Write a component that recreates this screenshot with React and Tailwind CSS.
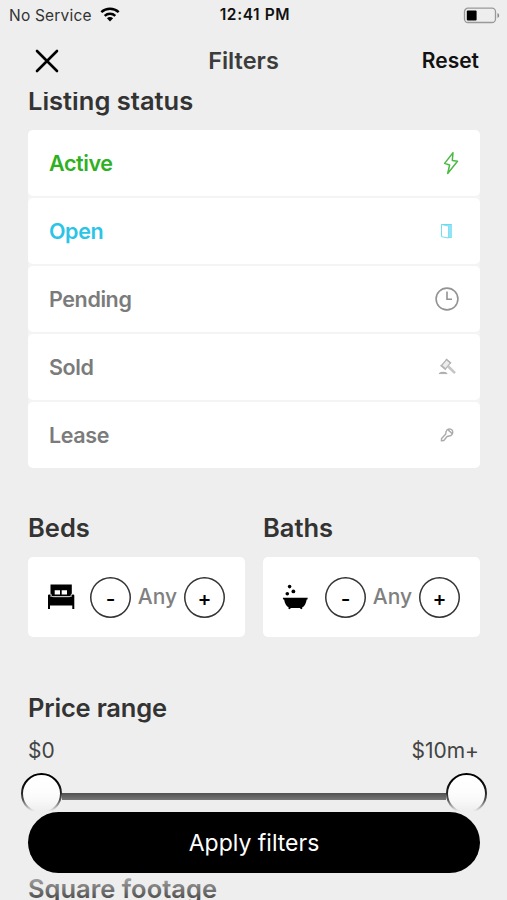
import React, { useState } from 'react';

const statuses = [
  { label: 'Active', color: 'text-[#2fb01f]', icon: BoltIcon },
  { label: 'Open', color: 'text-[#2cc4e6]', icon: DoorIcon },
  { label: 'Pending', color: 'text-[#7b7b7b]', icon: ClockIcon },
  { label: 'Sold', color: 'text-[#7b7b7b]', icon: GavelIcon },
  { label: 'Lease', color: 'text-[#7b7b7b]', icon: KeyIcon },
];

function BoltIcon() {
  return (
    <svg width="24" height="24" viewBox="0 0 24 24" fill="none" className="relative left-[4px]" stroke="#4cb944" strokeWidth="1.5" strokeLinejoin="round">
      <path d="M14 1.800 5.600 12.400l5 1.600-1.900 8.500 9.800-12.300-5.200-.8z" />
    </svg>
  );
}

function DoorIcon() {
  return (
    <svg width="24" height="24" viewBox="0 0 24 24" fill="none" strokeWidth="1">
      <path d="M6.500 5.500h10v13H14" stroke="#62d6ee" />
      <path d="M6.500 5.500v12.200l7 1.300V7z" stroke="#75dcf1" />
      <path d="M13.500 7l-3.500-1.200h7v12.700h-3.500z" fill="#90e4f6" />
    </svg>
  );
}

function ClockIcon() {
  return (
    <svg width="24" height="24" viewBox="0 0 24 24" fill="none" stroke="#939393" strokeWidth="1.600">
      <circle cx="12" cy="12" r="10.900" />
      <path d="M12 4.600v7.600h5" />
    </svg>
  );
}

function GavelIcon() {
  return (
    <svg width="24" height="24" viewBox="0 0 24 24" fill="none" stroke="#b4b4b4" strokeWidth="1.200">
      <path d="m6.500 10.500 5-6 4 3.300-5 6z" fill="#ececec" />
      <path d="m5.500 10.200 5.300 4.500M11 4l5 4.300" strokeWidth="1.500" />
      <path d="m13 11.200 7 6.900" stroke="#c6c6c6" strokeWidth="2.600" />
      <path d="M4 18.600c.8-1.800 7.400-1.800 8.200 0z" fill="#999" stroke="#aaa" strokeWidth=".8" />
    </svg>
  );
}

function KeyIcon() {
  return (
    <svg width="24" height="24" viewBox="0 0 24 24" fill="none" stroke="#aaa" strokeWidth="1.400" strokeLinejoin="round">
      <path d="M12.200 6.800c2-1.400 4.800-.7 5.400 1.200.7 2.400-.9 4.800-3.500 5l-2 .5-3.300 4-2.400.4.200-2.500 4.200-4.500c-.1-1.700.2-3 1.400-4.100z" />
      <path d="M13.500 7.300 17 10.500 15 8.500z" strokeWidth="1.500" />
    </svg>
  );
}

function BedIcon() {
  return (
    <svg width="28" height="26" viewBox="0 0 28 26">
      <path d="M3.500.5h21.300v12H3.500z" />
      <path d="M1 11.500c0-1.300 2.500-1.300 2.500 0v1.500h21.300v-1.500c0-1.300 2.500-1.300 2.500 0V25h-2v-3.500H3V25H1z" />
      <path d="M7.700 6.300h5.300v4.200H7.700zm7 0H20v4.200h-5.300z" fill="#fff" />
      <path d="M3.900 9.800c.2 2.200 1 2.900 2.600 2.900h15.400c1.600 0 2.400-.7 2.600-2.900" fill="none" stroke="#ddd" strokeWidth=".9" />
    </svg>
  );
}

function BathIcon() {
  return (
    <svg width="28" height="26" viewBox="0 0 28 26" fill="#000">
      <circle cx="7.600" cy="2.600" r="1.800" />
      <circle cx="11.400" cy="7.400" r="1.900" />
      <circle cx="5.300" cy="9.800" r="1.800" />
      <path d="M.8 13.800h25l-.4 1.600h-.7c-.6 4-2.400 7-4.600 8l.2 1.300c-1 .8-2 .6-2.300-.6H8.800c-.4 1.200-1.500 1.400-2.400.6l.3-1.300c-2.300-1.100-4-4-4.600-8h-.8z" />
    </svg>
  );
}

function StatusBar() {
  return (
    <div className="grid h-[30px] grid-cols-3 items-center pl-[9px] pr-[7px] text-[15.5px] leading-none text-[#333]">
      <div className="flex items-center gap-[8px]">
        <span className="whitespace-nowrap pt-px tracking-[0.2px]">No Service</span>
        <svg width="20" height="15" viewBox="0 0 20 15" fill="none" stroke="#000" strokeWidth="2.500" className="relative -top-px">
          <path d="M1.300 5.200c5-4.600 12.400-4.600 17.400 0" />
          <path d="M4.700 8.800c3-2.800 7.600-2.800 10.600 0" />
          <path d="M10 14.400 6.900 11.300c1.800-1.600 4.400-1.600 6.200 0z" fill="#000" stroke="none" />
        </svg>
      </div>
      <span className="pl-px text-center font-semibold tracking-[0.6px] text-[#111]">12:41 PM</span>
      <svg width="37" height="17" viewBox="0 0 37 17" className="justify-self-end">
        <rect x="1.500" y="1.200" width="31" height="14.300" rx="3.500" fill="none" stroke="#999" strokeWidth="1.300" />
        <rect x="3.800" y="3.500" width="9.800" height="10" rx="1" fill="#000" />
        <path d="M34.500 6c2.200.8 2.200 4.200 0 5z" fill="#888" />
      </svg>
    </div>
  );
}

function Counter({ title, icon: Icon }) {
  const [count, setCount] = useState(0);
  return (
    <div className="w-[217px]">
      <h2 className="text-[25.5px] font-semibold leading-[30px] text-[#333]">{title}</h2>
      <div className="mt-[14px] flex h-[80px] items-center rounded-[5px] bg-white pl-[19px]">
        <Icon />
        <button
          onClick={() => setCount(Math.max(0, count - 1))}
          className="ml-[15px] flex size-[41px] items-center justify-center rounded-full pt-[2px] text-[21px] font-medium leading-none text-black shadow-[inset_0_0_0_1.5px_#333]"
        >
          -
        </button>
        <span className="w-[53px] text-center text-[21px] font-medium text-[#808080]">{count || 'Any'}</span>
        <button
          onClick={() => setCount(count + 1)}
          className="flex size-[41px] items-center justify-center rounded-full pt-[2px] text-[21px] font-medium leading-none text-black shadow-[inset_0_0_0_1.5px_#333]"
        >
          +
        </button>
      </div>
    </div>
  );
}

const App = () => {
  return (
    <div className="relative h-[900px] w-[507px] overflow-hidden bg-[#eeeeee] font-['Inter','Liberation_Sans',sans-serif]">
      <StatusBar />
      <header className="grid h-[62px] grid-cols-3 items-center pl-[35px] pr-[28px]">
        <svg width="24" height="24" viewBox="0 0 24 24" stroke="#000" strokeWidth="2.600" strokeLinecap="round">
          <path d="m2 2 20 20M22 2 2 22" />
        </svg>
        <h1 className="pr-[27px] text-center text-[23.5px] font-semibold text-[#3c3c3c]">Filters</h1>
        <button className="justify-self-end text-[21px] font-semibold text-[#111]">Reset</button>
      </header>

      {/* Scrolling content */}
      <main className="h-[808px] overflow-hidden pl-[28px] pr-[27px]">
        <h2 className="-mt-[6px] text-[25.5px] font-semibold leading-[30px] text-[#333]">Listing status</h2>
        <div className="mt-[14px] flex flex-col gap-[2px] rounded-[5px] bg-[#f4f4f4]">
          {statuses.map(({ label, color, icon: Icon }) => (
            <div key={label} className="flex h-[66px] items-center justify-between rounded-[5px] bg-white px-[21px]">
              <span className={`text-[21.5px] font-semibold tracking-[-0.4px] ${color}`}>{label}</span>
              <Icon />
            </div>
          ))}
        </div>

        <div className="mt-[45px] flex justify-between">
          <Counter title="Beds" icon={BedIcon} />
          <Counter title="Baths" icon={BathIcon} />
        </div>

        <h2 className="mt-[56px] text-[25.5px] font-semibold leading-[30px] tracking-[-0.2px] text-[#333]">Price range</h2>
        <div className="mt-[14px] flex justify-between pr-px text-[21px] leading-[28px] text-[#444]">
          <span>$0</span>
          <span>$10m+</span>
        </div>
        <div className="-mx-[7px] mt-[8px] flex h-[41px] items-center">
          <div className="size-[41px] rounded-full border-2 border-black bg-white" />
          <div className="mt-[6px] h-[7px] flex-1 bg-[#333]" />
          <div className="size-[41px] rounded-full border-2 border-black bg-white" />
        </div>
        <h2 className="mt-[60px] text-[25.5px] font-semibold leading-[30px] text-[#333]">Square footage</h2>
      </main>

      {/* Footer button over a soft fade */}
      <div className="absolute inset-x-0 bottom-0 flex h-[120px] flex-col bg-[linear-gradient(to_bottom,#eeeeee00_0%,#eeeeee20_10%,#eeeeee60_17%,#eeeeee_26%,#eeeeee_66%,#eeeeee20_100%)] pl-[28px] pr-[27px] pt-[32px]">
        <button className="h-[61px] rounded-full bg-black pt-[2px] text-[23px] text-white">Apply filters</button>
      </div>
    </div>
  );
};

export default App;
